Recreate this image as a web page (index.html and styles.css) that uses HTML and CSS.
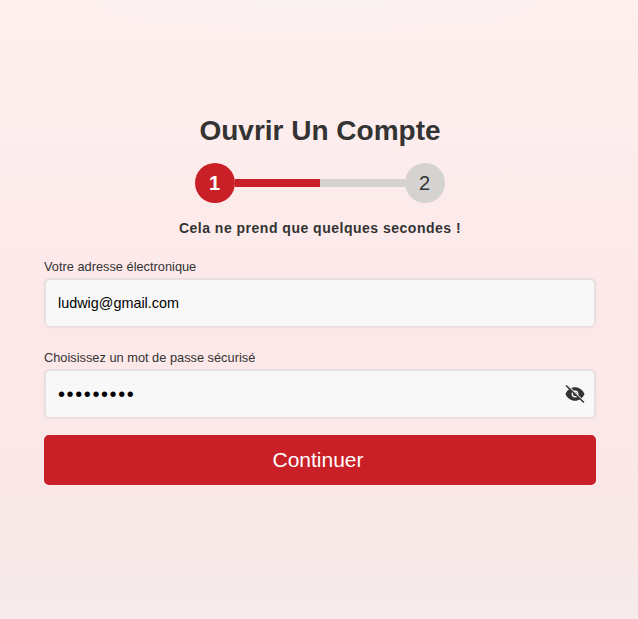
FILE: index.html
```html
<!DOCTYPE html>
<html lang="fr">
<head>
  <meta charset="UTF-8">
  <meta name="viewport" content="width=device-width, initial-scale=1.0">
  <title>Ouvrir Un Compte</title>
  <link rel="stylesheet" href="styles.css">
</head>
<body>
  <main class="signup">
    <h1 class="title">Ouvrir Un Compte</h1>
    <div class="steps">
      <span class="step step-active">1</span>
      <div class="progress"><div class="progress-fill"></div></div>
      <span class="step">2</span>
    </div>
    <p class="subtitle">Cela ne prend que quelques secondes !</p>
    <form class="form">
      <div class="field">
        <label for="email">Votre adresse électronique</label>
        <div class="input-box">
          <input id="email" type="text" value="ludwig@gmail.com">
        </div>
      </div>
      <div class="field">
        <label for="password">Choisissez un mot de passe sécurisé</label>
        <div class="input-box">
          <input id="password" type="password" value="ludwig123">
          <svg class="eye" viewBox="0 0 20 18" width="20" height="18" aria-hidden="true">
            <path fill-rule="evenodd" d="M.5 9C4 0 16 0 19.500 9 16 18 4 18 .5 9zM10 5.600a3.400 3.400 0 1 0 0 6.800 3.400 3.400 0 0 0 0-6.800z"/>
            <circle cx="10" cy="9" r="2"/>
            <path class="eye-gap" d="M2.500 .5l16.500 16"/>
            <path class="eye-slash" d="M1 .5l18 17"/>
          </svg>
        </div>
      </div>
      <button type="button" class="submit">Continuer</button>
    </form>
  </main>
</body>
</html>
```

FILE: styles.css
```css
* {
  box-sizing: border-box;
}
html, body {
  height: 100%;
}
body {
  margin: 0;
  font-family: "Liberation Sans", Arial, sans-serif;
  color: #333;
  background:
    radial-gradient(ellipse 48% 6% at 50% 0, #f9f1f1, rgba(249, 241, 241, 0)),
    linear-gradient(180deg, #fff0ee 0%, #fdeded 20%, #fde8e9 50%, #fae8e8 80%, #f6eaea 100%);
}
.signup {
  padding: 115px 42px 0 44px;
}
.title {
  margin: 0;
  font-size: 28px;
  line-height: 32px;
  font-weight: bold;
  text-align: center;
  color: #333;
}
.steps {
  display: flex;
  align-items: center;
  width: 250px;
  margin: 16px auto 0;
}
.step {
  flex: none;
  width: 40px;
  height: 40px;
  padding-right: 1px;
  border-radius: 50%;
  display: flex;
  align-items: center;
  justify-content: center;
  font-size: 20px;
  background: #d5d3d1;
  color: #333;
}
.step-active {
  background: #c92027;
  color: #fff;
  font-weight: bold;
}
.progress {
  flex: 1;
  height: 8px;
  background: #d5d3d1;
}
.progress-fill {
  width: 50%;
  height: 100%;
  background: #c92027;
}
.subtitle {
  margin: 16px 0 0;
  font-size: 14px;
  line-height: 18px;
  font-weight: bold;
  letter-spacing: 0.5px;
  text-align: center;
  color: #333;
}
.form {
  margin-top: 22px;
}
.field {
  margin-bottom: 22px;
}
.field + .field {
  margin-bottom: 16px;
}
label {
  display: block;
  font-size: 12.8px;
  line-height: 15px;
  margin-bottom: 4px;
  color: #333;
}
.input-box {
  position: relative;
  height: 50px;
  background: #f8f8f8;
  border: 2px solid #ebdfe0;
  border-radius: 6px;
  box-shadow: 0 0 2px #ebdfe0;
}
input {
  display: block;
  width: 100%;
  height: 100%;
  padding: 0 12px;
  border: none;
  outline: none;
  background: transparent;
  font-family: inherit;
  font-size: 14.4px;
  color: #000;
}
#password {
  padding-right: 44px;
  font-size: 20px;
  letter-spacing: 1.6px;
}
.eye {
  position: absolute;
  right: 9px;
  top: 14px;
  fill: #333;
}
.eye-gap {
  fill: none;
  stroke: #f8f8f8;
  stroke-width: 1.500;
}
.eye-slash {
  fill: none;
  stroke: #333;
  stroke-width: 1.500;
}
.submit {
  display: block;
  width: 100%;
  height: 50px;
  padding: 0 4px 0 0;
  border: none;
  border-radius: 5px;
  background: #c92027;
  color: #fff;
  font-family: inherit;
  font-size: 21px;
  cursor: pointer;
}
```
